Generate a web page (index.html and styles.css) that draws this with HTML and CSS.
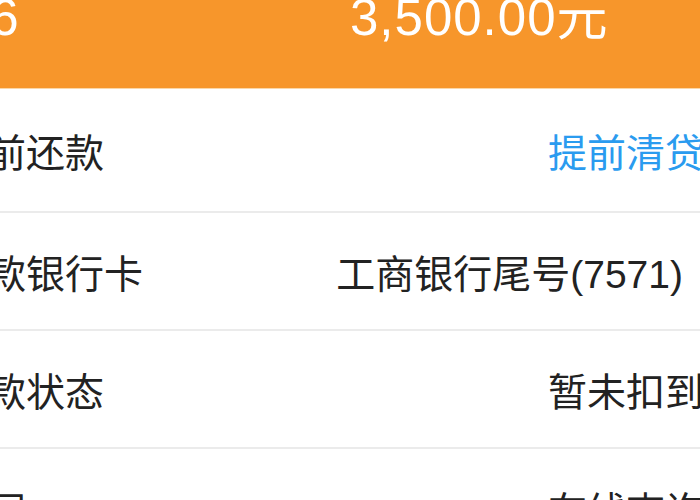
FILE: index.html
```html
<!DOCTYPE html>
<html lang="zh-CN">
<head>
<meta charset="utf-8">
<title>还款详情</title>
<link rel="stylesheet" href="styles.css">
</head>
<body>
<div class="screen">
  <header class="summary">
    <div class="summary-left"><span class="summary-text">06</span></div>
    <div class="summary-right"><span class="summary-text summary-text--amount">3,500.00元</span></div>
  </header>
  <div class="list">
    <div class="row row--first">
      <span class="label">提前还款</span>
      <span class="value value--link">提前清贷</span>
    </div>
    <div class="row">
      <span class="label">还款银行卡</span>
      <span class="value value--card">工商银行尾号(7571)</span>
    </div>
    <div class="row">
      <span class="label">还款状态</span>
      <span class="value">暂未扣到</span>
    </div>
    <div class="row row--last">
      <span class="label">合同</span>
      <span class="value">在线查询</span>
    </div>
  </div>
</div>
</body>
</html>
```

FILE: styles.css
```css
html, body {
  margin: 0;
  padding: 0;
  background: #ffffff;
  overflow: hidden;
}

body {
  width: 700px;
  height: 500px;
  font-family: "Liberation Sans", "Noto Sans CJK SC", sans-serif;
}

.screen {
  margin-left: -52px;
  width: 756px;
}

.summary {
  display: grid;
  grid-template-columns: 402px 1fr;
  height: 88px;
  background: #f7962b;
  border-bottom: 1px solid #fbd7a8;
  color: #ffffff;
  overflow: hidden;
}

.summary-text {
  display: block;
  font-size: 51px;
  line-height: 51px;
  margin-top: -8px;
  white-space: nowrap;
}

.summary-text--amount {
  letter-spacing: 1px;
}

.summary-left {
  padding-left: 14px;
}

.list {
  display: flex;
  flex-direction: column;
}

.row {
  display: flex;
  align-items: center;
  justify-content: space-between;
  height: 116px;
  border-bottom: 2px solid #ebebeb;
  font-size: 39px;
  color: #222222;
  white-space: nowrap;
}

.row--first {
  height: 122px;
}

.row--last {
  height: 118px;
  border-bottom: none;
}

.label {
  font-family: "Noto Sans CJK SC", sans-serif;
}

.value {
  font-family: "Noto Sans CJK SC", sans-serif;
}

.value--link {
  color: #2a9bef;
}

.value--card {
  font-family: "Liberation Sans", "Noto Sans CJK SC", sans-serif;
  margin-right: 21px;
}
```
